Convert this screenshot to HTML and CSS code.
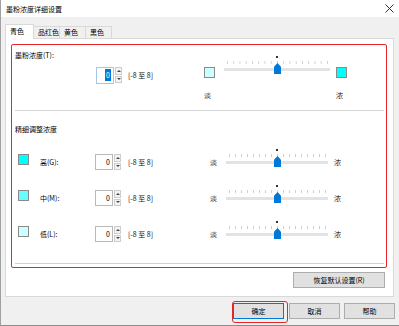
FILE: index.html
```html
<!DOCTYPE html>
<html lang="zh-CN">

<head>
    <meta charset="UTF-8">
    <meta name="viewport" content="width=device-width, initial-scale=1.0">
    <title>墨粉浓度详细设置</title>
    <link rel="stylesheet" href="styles.css">
</head>

<body>
    <div class="dialog">
        <div class="titlebar">
            <span>墨粉浓度详细设置</span>
            <svg class="close" width="9" height="9" viewBox="0 0 9 9">
                <path d="M0.5 0.5 L8.5 8.5 M8.5 0.5 L0.5 8.5" stroke="#333" stroke-width="1" fill="none" />
            </svg>
        </div>
        <div class="main">
            <div class="tabs">
                <div class="tab active">青色</div>
                <div class="tab">品红色</div>
                <div class="tab">黄色</div>
                <div class="tab">黑色</div>
            </div>
            <div class="panel">
                <div class="mark">
                    <div class="total">
                        <div class="total-label">墨粉浓度(T):</div>
                        <div class="spin-line">
                            <div class="spin">
                                <div class="spin-field focus"><span class="sel">0</span></div>
                                <div class="spin-btns">
                                    <span class="spin-up"></span>
                                    <span class="spin-down"></span>
                                </div>
                            </div>
                            <span class="range">[-8 至 8]</span>
                        </div>
                        <div class="total-slider">
                            <span class="swatch light sw-left"></span>
                            <div class="slider wide">
                                <i class="dot"></i><i class="ticks"></i><i class="track"></i><i class="thumb"></i>
                            </div>
                            <span class="swatch full sw-right"></span>
                            <span class="end lbl-left">淡</span>
                            <span class="end lbl-right">浓</span>
                        </div>
                    </div>
                    <div class="fine">
                        <div class="fine-label">精细调整浓度</div>
                        <div class="row">
                            <span class="swatch full"></span>
                            <span class="row-label">高(G):</span>
                            <div class="spin">
                                <div class="spin-field">0</div>
                                <div class="spin-btns">
                                    <span class="spin-up"></span>
                                    <span class="spin-down"></span>
                                </div>
                            </div>
                            <span class="range">[-8 至 8]</span>
                            <span class="end">淡</span>
                            <div class="slider">
                                <i class="dot"></i><i class="ticks"></i><i class="track"></i><i class="thumb"></i>
                            </div>
                            <span class="end far">浓</span>
                        </div>
                        <div class="row">
                            <span class="swatch mid"></span>
                            <span class="row-label">中(M):</span>
                            <div class="spin">
                                <div class="spin-field">0</div>
                                <div class="spin-btns">
                                    <span class="spin-up"></span>
                                    <span class="spin-down"></span>
                                </div>
                            </div>
                            <span class="range">[-8 至 8]</span>
                            <span class="end">淡</span>
                            <div class="slider">
                                <i class="dot"></i><i class="ticks"></i><i class="track"></i><i class="thumb"></i>
                            </div>
                            <span class="end far">浓</span>
                        </div>
                        <div class="row">
                            <span class="swatch light"></span>
                            <span class="row-label">低(L):</span>
                            <div class="spin">
                                <div class="spin-field">0</div>
                                <div class="spin-btns">
                                    <span class="spin-up"></span>
                                    <span class="spin-down"></span>
                                </div>
                            </div>
                            <span class="range">[-8 至 8]</span>
                            <span class="end">淡</span>
                            <div class="slider">
                                <i class="dot"></i><i class="ticks"></i><i class="track"></i><i class="thumb"></i>
                            </div>
                            <span class="end far">浓</span>
                        </div>
                    </div>
                </div>
                <div class="reset-line">
                    <button class="btn reset">恢复默认设置(R)</button>
                </div>
            </div>
        </div>
        <div class="footer">
            <span class="mark-ok"><button class="btn ok">确定</button></span>
            <button class="btn cancel">取消</button>
            <button class="btn">帮助</button>
        </div>
    </div>
</body>

</html>
```

FILE: styles.css
```css
* {
    box-sizing: border-box;
    margin: 0;
    padding: 0;
}
body {
    font-family: "Noto Sans CJK SC", "Noto Sans", sans-serif;
    font-size: 7px;
    color: #000;
    background: #f0f0f0;
}
.dialog {
    width: 399px;
    height: 326px;
    display: flex;
    flex-direction: column;
    border-left: 1px solid #a0a0a0;
    border-bottom: 1px solid #8c8c8c;
    background: #f0f0f0;
}
.titlebar {
    height: 17px;
    background: #fff;
    display: flex;
    align-items: center;
    justify-content: space-between;
    padding: 0 5px 0 5px;
    line-height: 12px;
}
.close {
    display: block;
}
.main {
    padding: 7px 5px 0 4px;
}
.tabs {
    height: 14px;
    display: flex;
    align-items: flex-end;
    position: relative;
    z-index: 1;
}
.tab {
    height: 12px;
    line-height: 10px;
    padding-left: 4px;
    width: 27px;
    border: 1px solid #d9d9d9;
    border-bottom: none;
    margin-left: -1px;
    background: #f0f0f0;
}
.tab.active {
    height: 15px;
    width: 29px;
    margin-left: 0;
    margin-bottom: -1px;
    padding-left: 4px;
    line-height: 13px;
    background: #fff;
}
.panel {
    height: 259px;
    border: 1px solid #d9d9d9;
    background: #fff;
    padding: 5px 6px 8px 5px;
}
.mark {
    height: 224px;
    border: 1px solid #e5262b;
    border-radius: 2px;
}
.total {
    height: 66px;
    margin: 0 2px 0 3px;
    padding-top: 4px;
    border-bottom: 1px solid #d4d4d4;
    display: grid;
    grid-template-columns: 81px 108px auto;
    grid-template-rows: 12px auto;
}
.total-label {
    grid-column: 1 / 3;
    grid-row: 1;
    line-height: 12px;
}
.spin-line {
    grid-column: 2;
    grid-row: 2;
    align-self: start;
    margin-top: 6px;
    display: flex;
    align-items: center;
    gap: 6px;
}
.total-slider {
    grid-column: 3;
    grid-row: 1 / 3;
    margin-top: 7px;
    display: grid;
    grid-template-columns: 11px 9px 106px 6px 11px;
    grid-template-rows: 22px auto;
    row-gap: 11px;
    align-self: start;
}
.sw-left {
    grid-column: 1;
    grid-row: 1;
    margin-top: 11px;
}
.total-slider .slider {
    grid-column: 3;
    grid-row: 1;
}
.sw-right {
    grid-column: 5;
    grid-row: 1;
    margin-top: 11px;
}
.lbl-left {
    grid-column: 1;
    grid-row: 2;
}
.lbl-right {
    grid-column: 5;
    grid-row: 2;
}
.fine {
    height: 153px;
    margin: 0 2px 0 3px;
    padding-top: 12px;
    border-bottom: 1px solid #d0d0d0;
}
.fine-label {
    line-height: 12px;
    margin-bottom: 9px;
}
.row {
    height: 36px;
    display: flex;
    align-items: center;
    padding-left: 3px;
}
.row .swatch {
    margin-right: 11px;
    margin-bottom: 5px;
}
.row-label {
    width: 55px;
    line-height: 12px;
}
.row .range {
    margin-left: 7px;
    width: 82px;
}
.row .end {
    width: 16px;
}
.row .slider {
    align-self: flex-start;
    margin-top: 5px;
}
.row .end.far {
    margin-left: 6px;
}
.swatch {
    display: block;
    width: 11px;
    height: 11px;
    border: 1px solid #8a8a8a;
}
.swatch.full {
    background: #00ffff;
}
.swatch.mid {
    background: #66ffff;
}
.swatch.light {
    background: #ccffff;
}
.end {
    line-height: 12px;
    color: #222;
}
.range {
    line-height: 12px;
    color: #111;
}
.spin {
    display: flex;
    height: 16px;
    width: 26px;
}
.spin-field {
    width: 18px;
    border: 1px solid #b9b9b9;
    text-align: right;
    padding-right: 2px;
    line-height: 14px;
    background: #fff;
}
.spin-field.focus {
    height: 17px;
    border-color: #a7c5e6;
}
.sel {
    display: inline-block;
    background: #0078d7;
    color: #fff;
    line-height: 12px;
    padding: 0 1px;
    margin-top: 1px;
}
.spin-btns {
    width: 8px;
    display: flex;
    flex-direction: column;
    gap: 1px;
    padding: 0 0 0 1px;
}
.spin-up,
.spin-down {
    flex: 1;
    border: 1px solid #cdcdcd;
    background: #f4f4f4;
    display: flex;
    align-items: center;
    justify-content: center;
}
.spin-up::before {
    content: "";
    border-left: 2px solid transparent;
    border-right: 2px solid transparent;
    border-bottom: 2px solid #444;
}
.spin-down::before {
    content: "";
    border-left: 2px solid transparent;
    border-right: 2px solid transparent;
    border-top: 2px solid #444;
}
.slider {
    position: relative;
    width: 102px;
    height: 20px;
}
.slider.wide {
    width: 106px;
}
.slider i {
    position: absolute;
    display: block;
}
.dot {
    top: 0;
    left: calc(50% - 1px);
    width: 2px;
    height: 2px;
    background: #333;
}
.ticks {
    top: 5px;
    left: 3px;
    right: 2px;
    height: 3px;
    background: linear-gradient(90deg, #cfcfcf 1px, transparent 1px) 0 0 / calc((100% - 1px) / 16) 100% repeat-x;
}
.track {
    top: 12px;
    left: 0;
    right: 0;
    height: 3px;
    background: #e3e3e3;
}
.thumb {
    top: 7px;
    left: calc(50% - 3px);
    width: 7px;
    height: 11px;
    background: #0078d7;
    clip-path: polygon(50% 0, 100% 35%, 100% 100%, 0 100%, 0 35%);
}
.reset-line {
    display: flex;
    justify-content: flex-end;
    margin-top: 4px;
}
.btn {
    font-family: inherit;
    font-size: 7px;
    color: #000;
    height: 16px;
    width: 51px;
    line-height: 14px;
    border: 1px solid #adadad;
    background: #e1e1e1;
}
.btn.reset {
    width: 92px;
    margin-right: 2px;
}
.btn.ok {
    display: block;
    border-color: #0078d7;
}
.footer {
    flex: 1;
    display: flex;
    justify-content: flex-end;
    align-items: flex-start;
    padding: 4px 4px 0 0;
}
.mark-ok {
    display: block;
    border: 1px solid #e5262b;
    border-radius: 3px;
    padding: 1px 3px 3px 0;
    margin-right: 1px;
}
.footer .btn {
    margin-top: 2px;
}
.footer .mark-ok .btn {
    margin-top: 0;
}
.btn.cancel {
    margin-right: 4px;
}
```
